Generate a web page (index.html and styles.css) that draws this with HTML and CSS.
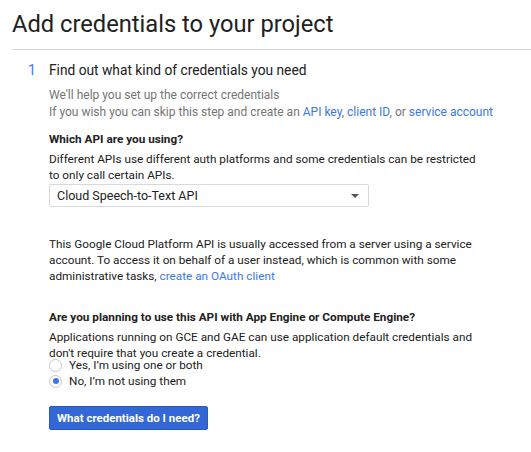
FILE: index.html
```html
<!DOCTYPE html>
<html>
<head>
<meta charset="utf-8">
<link rel="stylesheet" href="styles.css">
</head>
<body>
<div class="page">
  <h1 class="title">Add credentials to your project</h1>
  <div class="step">
    <div class="step-num">1</div>
    <div class="step-body">
      <h2 class="step-title">Find out what kind of credentials you need</h2>
      <div class="intro">
        <div>We'll help you set up the correct credentials</div>
        <div>If you wish you can skip this step and create an <a href="#">API key</a>, <a href="#">client ID</a>, or <a href="#">service account</a></div>
      </div>
      <div class="label">Which API are you using?</div>
      <p class="desc">Different APIs use different auth platforms and some credentials can be restricted to only call certain APIs.</p>
      <div class="select">
        <span>Cloud Speech-to-Text API</span>
        <span class="arrow"></span>
      </div>
      <p class="para">This Google Cloud Platform API is usually accessed from a server using a service account. To access it on behalf of a user instead, which is common with some administrative tasks, <a href="#">create an OAuth client</a></p>
      <div class="label label2">Are you planning to use this API with App Engine or Compute Engine?</div>
      <p class="desc">Applications running on GCE and GAE can use application default credentials and don't require that you create a credential.</p>
      <div class="radios">
        <label class="radio"><span class="circle"></span>Yes, I’m using one or both</label>
        <label class="radio"><span class="circle checked"></span>No, I’m not using them</label>
      </div>
      <button class="btn">What credentials do I need?</button>
    </div>
  </div>
</div>
</body>
</html>
```
FILE: styles.css
```css
* { box-sizing: border-box; }
body {
  margin: 0;
  background: #fff;
  font-family: Roboto, "Liberation Sans", sans-serif;
  color: #212121;
}
.page {
  padding: 8px 0 0 12px;
}
.title {
  margin: 0;
  font-size: 23.7px;
  font-weight: 400;
  line-height: 32px;
  color: #212121;
  padding-bottom: 9px;
  border-bottom: 1px solid #d6d6d6;
}
.step {
  display: flex;
  padding-top: 10px;
}
.step-num {
  flex: 0 0 37px;
  padding-left: 16px;
  font-size: 14px;
  line-height: 20px;
  color: #3b78e7;
}
.step-body {
  flex: 1;
  min-width: 0;
  padding-right: 46px;
}
.step-title {
  margin: 0;
  font-size: 13.75px;
  font-weight: 400;
  line-height: 20px;
  color: #212121;
}
.intro {
  margin-top: 7px;
  font-size: 12px;
  line-height: 17px;
  color: #757575;
  white-space: nowrap;
}
a { color: #3b78e7; text-decoration: none; }
.label {
  margin-top: 9px;
  font-size: 11.75px;
  font-weight: 700;
  line-height: 18px;
  color: #212121;
}
.label2 { margin-top: 24px; }
.desc, .para {
  margin: 3px 0 0;
  font-size: 11.75px;
  line-height: 16px;
  color: #212121;
}
.select {
  margin-top: 1px;
  width: 320px;
  height: 23px;
  border: 1px solid #d9d9d9;
  border-radius: 2px;
  display: flex;
  align-items: center;
  justify-content: space-between;
  padding: 0 8px 0 7px;
  font-size: 12.5px;
  color: #212121;
}
.arrow {
  width: 0; height: 0;
  border-left: 4px solid transparent;
  border-right: 4px solid transparent;
  border-top: 4px solid #555;
  margin-right: 1px;
}
.para { margin-top: 29px; }
.radios { display: flex; flex-direction: column; gap: 8px; }
.radio {
  display: flex;
  align-items: center;
  height: 8px;
  line-height: 8px;
  font-size: 11.75px;
  color: #212121;
}
.circle {
  flex: 0 0 13px;
  width: 13px; height: 13px;
  border-radius: 50%;
  border: 1px solid #c6c6c6;
  margin-right: 7px;
  position: relative;
  background: #fff;
}
.circle.checked::after {
  content: "";
  position: absolute;
  left: 2.5px; top: 2.5px;
  width: 6px; height: 6px;
  border-radius: 50%;
  background: #3b78e7;
}
.btn {
  margin-top: 21px;
  display: block;
  height: 24px;
  background: #3367d6;
  border: 1px solid #2a56c6;
  border-radius: 2px;
  color: #fff;
  font-family: Roboto, "Liberation Sans", sans-serif;
  font-weight: 700;
  font-size: 11.5px;
  white-space: nowrap;
  padding: 0 7px;
}
```
